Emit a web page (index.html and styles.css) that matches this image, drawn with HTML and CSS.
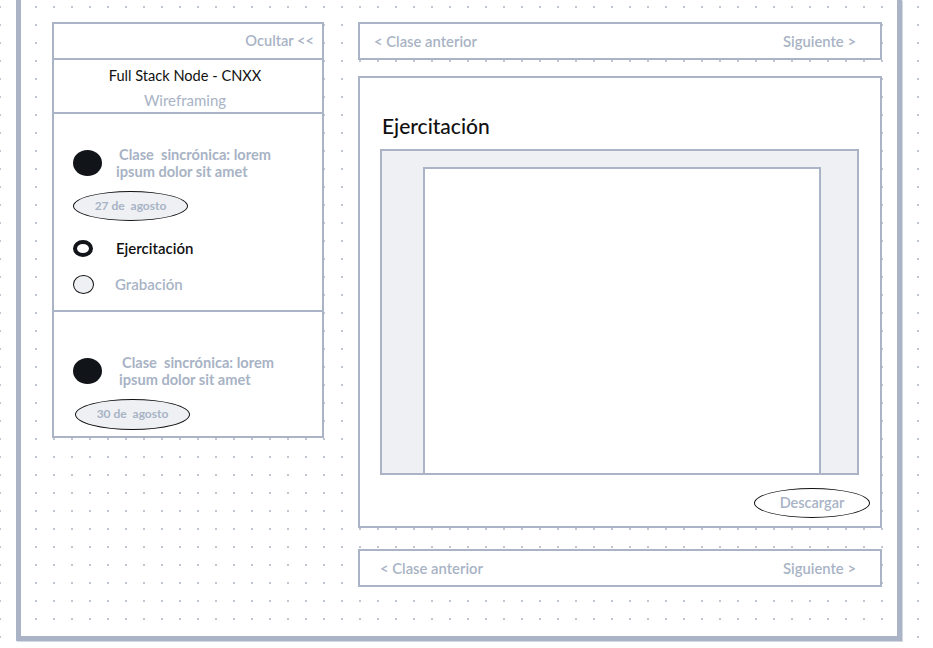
FILE: index.html
```html
<!DOCTYPE html>
<html lang="es">
<head>
<meta charset="utf-8">
<title>Full Stack Node - Ejercitación</title>
<link rel="stylesheet" href="styles.css">
</head>
<body>
<div class="frame">
  <aside class="sidebar">
    <div class="side-head">Ocultar &lt;&lt;</div>
    <div class="side-title">
      <div class="course">Full Stack Node - CNXX</div>
      <div class="module">Wireframing</div>
    </div>
    <div class="class-sec first">
      <div class="class-row">
        <span class="dot"></span>
        <span class="class-text">Clase&nbsp; sincrónica: lorem<br>ipsum dolor sit amet</span>
      </div>
      <div class="pill">27 de&nbsp; agosto</div>
      <div class="radio-row active"><span class="radio on"></span><span class="radio-label">Ejercitación</span></div>
      <div class="radio-row"><span class="radio off"></span><span class="radio-label muted">Grabación</span></div>
    </div>
    <div class="class-sec second">
      <div class="class-row">
        <span class="dot"></span>
        <span class="class-text">Clase&nbsp; sincrónica: lorem<br>ipsum dolor sit amet</span>
      </div>
      <div class="pill">30 de&nbsp; agosto</div>
    </div>
  </aside>
  <main class="content">
    <nav class="pager top"><span>&lt; Clase anterior</span><span>Siguiente &gt;</span></nav>
    <section class="panel">
      <h1 class="panel-title">Ejercitación</h1>
      <div class="viewer"><div class="doc"></div></div>
      <div class="actions"><span class="download">Descargar</span></div>
    </section>
    <nav class="pager bottom"><span>&lt; Clase anterior</span><span>Siguiente &gt;</span></nav>
  </main>
</div>
</body>
</html>
```

FILE: styles.css
```css
* { box-sizing: border-box; }

html, body {
  margin: 0;
  padding: 0;
}

body {
  width: 933px;
  height: 648px;
  overflow: hidden;
  font-family: Lato, "Open Sans", "Liberation Sans", sans-serif;
  font-size: 15px;
  color: #a8b3c5;
  background-color: #ffffff;
  background-image: radial-gradient(circle, #bfc7d4 0.9px, rgba(255,255,255,0) 1.3px);
  background-size: 18px 18px;
  background-position: 27px 16px;
}

.frame {
  margin-left: 16px;
  width: 886px;
  height: 641px;
  border-left: 5px solid #aab4c6;
  border-right: 5px solid #aab4c6;
  border-bottom: 5px solid #aab4c6;
  box-shadow: 1px 1px 0 #d3d9e2;
  padding: 22px 15px 0 31px;
  display: flex;
  gap: 34px;
  align-items: flex-start;
}

/* Sidebar */
.sidebar {
  width: 272px;
  border: 2px solid #aab4c6;
  background: #fff;
}

.side-head {
  height: 36px;
  line-height: 34px;
  text-align: right;
  padding-right: 8px;
  border-bottom: 2px solid #aab4c6;
  font-size: 14.6px;
  font-weight: 600;
}

.side-title {
  text-align: center;
  padding-top: 4px;
  height: 54px;
  border-bottom: 2px solid #aab4c6;
  line-height: 24px;
}

.course { color: #111; padding-right: 6px; font-size: 14.6px; }
.module { padding-right: 6px; }

.class-sec {
  padding-left: 19px;
  border-bottom: 2px solid #aab4c6;
}
.class-sec.first { height: 198px; padding-top: 32px; }
.class-sec.second { height: 124px; padding-top: 42px; border-bottom: none; }

.class-row {
  display: flex;
  align-items: center;
  height: 34px;
  gap: 14px;
}

.dot {
  flex: none;
  width: 29px;
  height: 26px;
  border-radius: 50%;
  background: #111418;
}

.class-text {
  font-size: 14.6px;
  font-weight: 700;
  line-height: 17px;
  text-indent: 3px;
}
.second .class-text { margin-left: 3px; }

.pill {
  margin-top: 11px;
  width: 115px;
  height: 30px;
  border: 1px solid #111;
  border-radius: 50%;
  background: #eef0f4;
  font-size: 12px;
  font-weight: 700;
  text-align: center;
  line-height: 28px;
}
.second .pill { margin-left: 2px; height: 31px; }

.radio-row {
  display: flex;
  align-items: center;
  height: 20px;
  margin-top: 16px;
}
.radio-row.active { margin-top: 17px; }

.radio {
  flex: none;
  border-radius: 50%;
}
.radio.on {
  width: 20px;
  height: 17px;
  border: 4px solid #111418;
  background: #fff;
  margin-right: 23px;
}
.radio.off {
  width: 21px;
  height: 19px;
  border: 1px solid #111;
  background: #eef0f4;
  margin-right: 21px;
}

.radio-label {
  color: #111;
  font-weight: 600;
}
.radio-label.muted { color: #a8b3c5; }

/* Content */
.content {
  width: 524px;
  display: flex;
  flex-direction: column;
}

.pager {
  height: 38px;
  border: 2px solid #aab4c6;
  background: #fff;
  display: flex;
  justify-content: space-between;
  align-items: center;
  padding: 0 24px 0 14px;
  font-size: 14.8px;
  font-weight: 600;
}
.pager.bottom {
  margin-top: 21px;
  padding-left: 20px;
}

.panel {
  margin-top: 16px;
  height: 452px;
  border: 2px solid #aab4c6;
  background: #fff;
  padding-top: 36px;
}

.panel-title {
  margin: 0 0 0 22px;
  font-size: 21px;
  font-weight: 500;
  line-height: 24px;
  color: #111;
}

.viewer {
  margin: 11px 0 0 20px;
  width: 479px;
  height: 326px;
  border: 2px solid #aab4c6;
  background: #eef0f4;
  padding: 16px 36px 0 41px;
}

.doc {
  height: 306px;
  border: 2px solid #aab4c6;
  border-bottom: none;
  background: #fff;
}

.actions {
  display: flex;
  justify-content: flex-end;
  padding-right: 10px;
  margin-top: 13px;
}

.download {
  width: 116px;
  height: 30px;
  border: 1px solid #111;
  border-radius: 50%;
  text-align: center;
  line-height: 28px;
  font-size: 14.5px;
  font-weight: 600;
  background: #fff;
}
```
